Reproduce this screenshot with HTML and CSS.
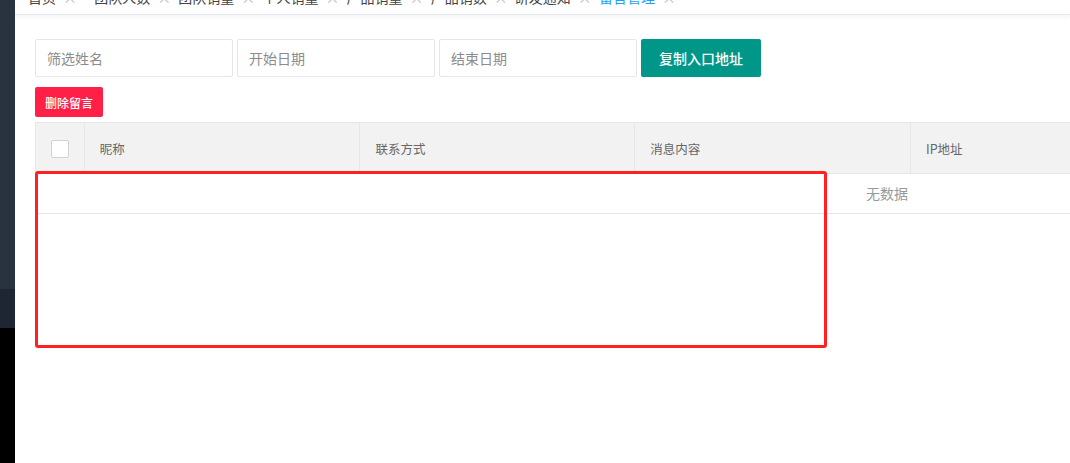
FILE: index.html
```html
<!DOCTYPE html>
<html lang="zh-CN">
<head>
    <meta charset="UTF-8">
    <meta name="viewport" content="width=device-width, initial-scale=1.0">
    <title>留言管理</title>
    <link rel="stylesheet" href="styles.css">
</head>
<body>
    <div class="layout">
        <aside class="side">
            <div class="side-top"></div>
            <div class="side-mid"></div>
            <div class="side-bottom"></div>
        </aside>

        <main class="main">
            <div class="tabs">
                <span class="tab tab-home">首页<i class="tab-close">×</i></span>
                <span class="tab">团队人数<i class="tab-close">×</i></span>
                <span class="tab">团队销量<i class="tab-close">×</i></span>
                <span class="tab">个人销量<i class="tab-close">×</i></span>
                <span class="tab">产品销量<i class="tab-close">×</i></span>
                <span class="tab">产品销数<i class="tab-close">×</i></span>
                <span class="tab">研发通知<i class="tab-close">×</i></span>
                <span class="tab tab-active">留言管理<i class="tab-close">×</i></span>
            </div>

            <div class="content">
                <div class="toolbar">
                    <input class="field" type="text" placeholder="筛选姓名" />
                    <input class="field" type="text" placeholder="开始日期" />
                    <input class="field" type="text" placeholder="结束日期" />
                    <button class="btn btn-teal">复制入口地址</button>
                </div>

                <div class="actions">
                    <button class="btn btn-danger">删除留言</button>
                </div>

                <div class="grid">
                    <table class="grid-head">
                        <colgroup>
                            <col class="col-check">
                            <col class="col-wide">
                            <col class="col-mid">
                            <col class="col-wide">
                            <col class="col-wide">
                            <col class="col-wide">
                            <col class="col-wide">
                        </colgroup>
                        <thead>
                            <tr>
                                <th class="th-check"><span class="checkbox"></span></th>
                                <th>昵称</th>
                                <th>联系方式</th>
                                <th>消息内容</th>
                                <th>IP地址</th>
                                <th>留言时间</th>
                                <th>操作</th>
                            </tr>
                        </thead>
                    </table>
                    <div class="grid-none">无数据</div>
                </div>
            </div>
        </main>
    </div>

    <!-- 标注框 -->
    <div class="mark"></div>
</body>
</html>
```

FILE: styles.css
```css
/* 通用 */
html, body {
    margin: 0;
    height: 100%;
    overflow: hidden;
}

body {
    position: relative;
    font-family: "Noto Sans CJK SC", "Noto Sans", sans-serif;
    background-color: #FFFFFF;
    color: #333333;
}

.layout {
    display: flex;
    height: 100%;
}

/* 左侧栏 */
.side {
    width: 15px;
    flex-shrink: 0;
    display: flex;
    flex-direction: column;
}

.side-top {
    height: 289px;
    background-color: #28333F;
}

.side-mid {
    height: 39px;
    background-color: #1F2633;
}

.side-bottom {
    flex: 1;
    background-color: #000000;
}

.main {
    flex: 1;
    min-width: 0;
    overflow: hidden;
}

/* 标签栏 */
.tabs {
    margin-top: -19px;
    height: 33px;
    line-height: 33px;
    padding-left: 13px;
    white-space: nowrap;
    font-size: 14px;
    color: #444444;
    background-color: #FFFFFF;
    border-bottom: 1px solid #E4E6EE;
    box-shadow: 0 2px 5px rgba(0, 21, 41, 0.05);
    position: relative;
}

.tab {
    display: inline-block;
    margin-right: 8px;
}

.tab-home {
    margin-right: 18px;
}

.tab-close {
    display: inline-block;
    width: 10px;
    margin-left: 7px;
    text-align: center;
    font-style: normal;
    color: #C2C2C2;
}

.tab-active {
    color: #1E9FFF;
}

/* 内容 */
.content {
    padding: 24px 20px 0;
}

.toolbar {
    display: flex;
    gap: 4px;
}

.field {
    width: 198px;
    height: 38px;
    box-sizing: border-box;
    padding: 0 11px;
    border: 1px solid #E6E6E6;
    border-radius: 2px;
    font-family: inherit;
    font-size: 14px;
    color: #333333;
    outline: none;
}

.field::placeholder {
    color: #8C8C8C;
}

.btn {
    border: none;
    border-radius: 2px;
    color: #FFFFFF;
    font-family: inherit;
    font-weight: 500;
    cursor: pointer;
    padding: 0;
}

.btn-teal {
    width: 120px;
    height: 38px;
    font-size: 14px;
    background-color: #009688;
}

.actions {
    margin-top: 10px;
}

.btn-danger {
    width: 68px;
    height: 30px;
    font-size: 12px;
    background-color: #FF1F47;
}

/* 表格 */
.grid {
    margin-top: 5px;
    width: 1702px;
    border-left: 1px solid #E6E6E6;
    border-right: 1px solid #E6E6E6;
}

.grid-head {
    width: 100%;
    table-layout: fixed;
    border-collapse: collapse;
}

.col-check {
    width: 48px;
}

.col-wide {
    width: 275px;
}

.col-mid {
    width: 274px;
}

.grid-head th {
    height: 50px;
    padding: 0 15px;
    text-align: left;
    font-weight: normal;
    font-size: 12.5px;
    color: #666666;
    background-color: #F2F2F2;
    border: 1px solid #E6E6E6;
    border-left: none;
}

.grid-head th:last-child {
    border-right: none;
}

.grid-head .th-check {
    padding: 0;
    text-align: center;
}

.checkbox {
    display: inline-block;
    width: 16px;
    height: 16px;
    border: 1px solid #D2D2D2;
    border-radius: 2px;
    background-color: #FFFFFF;
    vertical-align: middle;
}

.grid-none {
    height: 39px;
    line-height: 39px;
    text-align: center;
    font-size: 14px;
    color: #999999;
    border-bottom: 1px solid #E6E6E6;
}

/* 红色标注框 */
.mark {
    position: absolute;
    left: 35px;
    top: 171px;
    width: 792px;
    height: 177px;
    box-sizing: border-box;
    border: 3px solid #FF2121;
    border-radius: 3px;
}
```
